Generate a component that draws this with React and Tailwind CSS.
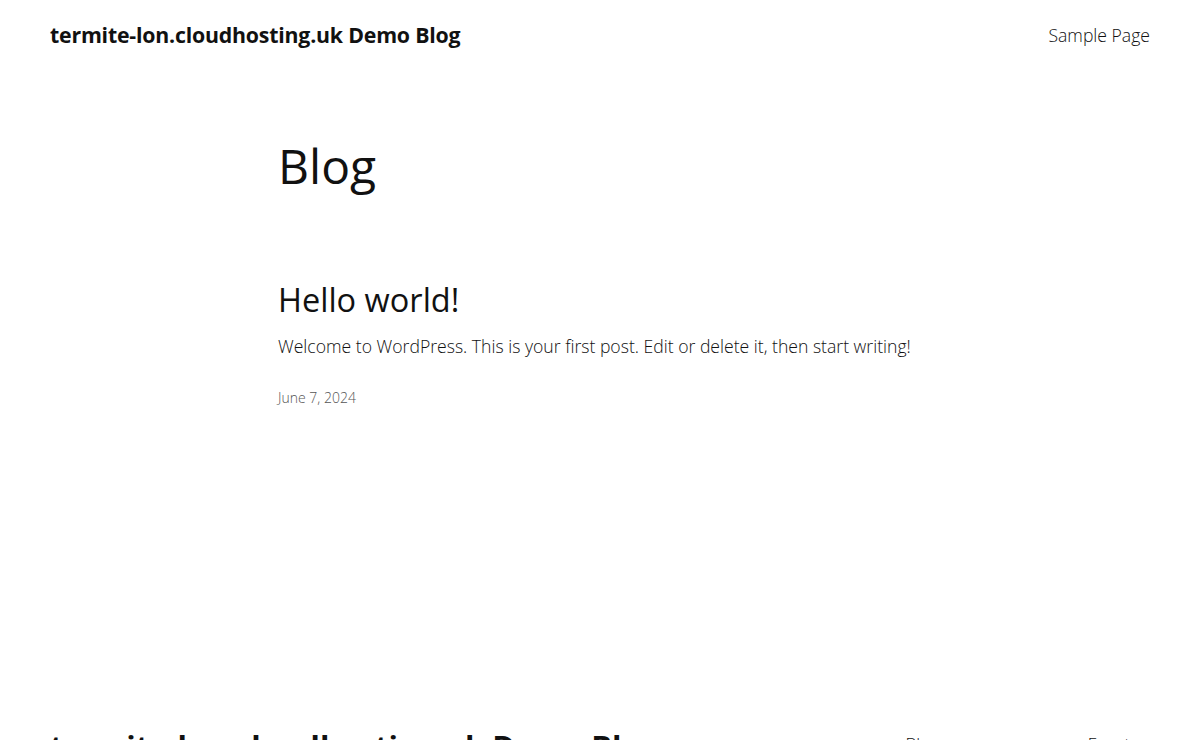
export default function App() {
  return (
    <div className="min-h-screen bg-white text-[#111111] font-['Open_Sans',sans-serif] overflow-hidden">
      <header className="h-[70px] px-[50px] flex items-center justify-between">
        <a className="text-[21.3px] font-bold tracking-[-0.2px]">termite-lon.cloudhosting.uk Demo Blog</a>
        <nav className="text-[17.6px] font-light">
          <a>Sample Page</a>
        </nav>
      </header>

      <main className="pl-[278px] pr-[50px]">
        <h1 className="mt-[72px] text-[48px] leading-none font-normal">Blog</h1>

        <article className="mt-[90px]">
          <h2 className="text-[32.5px] leading-[1.2] font-normal">Hello world!</h2>
          <p className="mt-[13px] text-[17.6px] leading-[1.6] font-light">
            Welcome to WordPress. This is your first post. Edit or delete it, then start writing!
          </p>
          <div className="mt-[27px] text-[14px] font-light text-[#555555]">June 7, 2024</div>
        </article>
      </main>

      <footer className="mt-[323px] px-[50px] flex items-start">
        <div className="flex-1 text-[31px] font-bold leading-none whitespace-nowrap">termite-lon.cloudhosting.uk Demo Blog</div>
        <div className="flex gap-[149px] pr-[12px] text-[17px] font-light">
          <a>Blog</a>
          <a>Events</a>
        </div>
      </footer>
    </div>
  );
}
